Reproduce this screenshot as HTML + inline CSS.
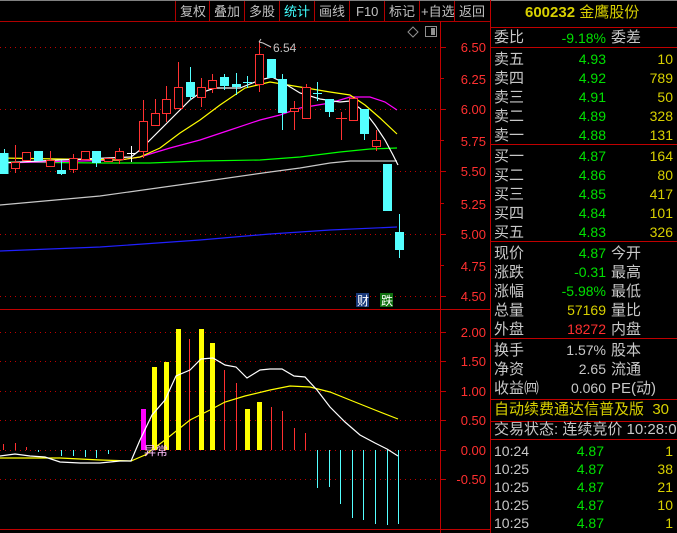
<!DOCTYPE html>
<html><head><meta charset="utf-8"><style>
body{margin:0;background:#000;width:677px;height:533px;overflow:hidden;position:relative;font-family:"Liberation Sans","Noto Sans CJK SC",sans-serif}
.t{position:absolute;font-size:14px;line-height:16px;white-space:nowrap}
.g{color:#c8c8c8}.n{color:#00e000}.y{color:#d8d000}.r{color:#ff3030}
.ra{text-align:right}
.c{font-size:15px}
</style></head><body>
<svg width="677" height="533" style="position:absolute;left:0;top:0" font-family="Liberation Sans,Noto Sans CJK SC,sans-serif">
<line x1="0" y1="0.5" x2="677" y2="0.5" stroke="#808080"/>
<line x1="0" y1="21.5" x2="490" y2="21.5" stroke="#b00000"/>
<g stroke="#b00000"><line x1="175.5" y1="1" x2="175.5" y2="21"/><line x1="209.5" y1="1" x2="209.5" y2="21"/><line x1="244.5" y1="1" x2="244.5" y2="21"/><line x1="279.5" y1="1" x2="279.5" y2="21"/><line x1="314.5" y1="1" x2="314.5" y2="21"/><line x1="349.5" y1="1" x2="349.5" y2="21"/><line x1="384.5" y1="1" x2="384.5" y2="21"/><line x1="419.5" y1="1" x2="419.5" y2="21"/><line x1="454.5" y1="1" x2="454.5" y2="21"/></g>
<g font-size="13" fill="#c0c0c0"><text x="180" y="16">复权</text><text x="214" y="16">叠加</text><text x="249" y="16">多股</text><text x="284" y="16" fill="#40ffff">统计</text><text x="319" y="16">画线</text><text x="356" y="16">F10</text><text x="389" y="16">标记</text><text x="421" y="16">+自选</text><text x="459" y="16">返回</text></g>
<line x1="440.5" y1="21" x2="440.5" y2="533" stroke="#c00000"/>
<line x1="490.5" y1="0" x2="490.5" y2="533" stroke="#c00000"/>
<line x1="0" y1="309.5" x2="490" y2="309.5" stroke="#c00000"/>
<line x1="0" y1="529.5" x2="490" y2="529.5" stroke="#c00000"/>
<g stroke="#c00000" stroke-dasharray="1,4"><line x1="0" y1="47.5" x2="440" y2="47.5"/><line x1="0" y1="109.5" x2="440" y2="109.5"/><line x1="0" y1="171.5" x2="440" y2="171.5"/><line x1="0" y1="234.5" x2="440" y2="234.5"/><line x1="0" y1="296.5" x2="440" y2="296.5"/>
<line x1="0" y1="332.5" x2="440" y2="332.5"/><line x1="0" y1="361.5" x2="440" y2="361.5"/><line x1="0" y1="391.5" x2="440" y2="391.5"/><line x1="0" y1="420.5" x2="440" y2="420.5"/><line x1="0" y1="450.5" x2="440" y2="450.5"/><line x1="0" y1="479.5" x2="440" y2="479.5"/></g>
<g stroke="#c00000"><line x1="440" y1="47.5" x2="446" y2="47.5"/><line x1="440" y1="78.5" x2="444" y2="78.5"/><line x1="440" y1="109.5" x2="446" y2="109.5"/><line x1="440" y1="140.5" x2="444" y2="140.5"/><line x1="440" y1="171.5" x2="446" y2="171.5"/><line x1="440" y1="203.5" x2="444" y2="203.5"/><line x1="440" y1="234.5" x2="446" y2="234.5"/><line x1="440" y1="265.5" x2="444" y2="265.5"/><line x1="440" y1="296.5" x2="446" y2="296.5"/>
<line x1="440" y1="332.5" x2="446" y2="332.5"/><line x1="440" y1="361.5" x2="446" y2="361.5"/><line x1="440" y1="391.5" x2="446" y2="391.5"/><line x1="440" y1="420.5" x2="446" y2="420.5"/><line x1="440" y1="450.5" x2="446" y2="450.5"/><line x1="440" y1="479.5" x2="446" y2="479.5"/></g>
<g font-size="13" fill="#ff3030" text-anchor="end"><text x="486" y="52">6.50</text><text x="486" y="84">6.25</text><text x="486" y="114">6.00</text><text x="486" y="146">5.75</text><text x="486" y="176">5.50</text><text x="486" y="209">5.25</text><text x="486" y="239">5.00</text><text x="486" y="271">4.75</text><text x="486" y="301">4.50</text>
<text x="486" y="337">2.00</text><text x="486" y="366">1.50</text><text x="486" y="396">1.00</text><text x="486" y="425">0.50</text><text x="486" y="455">0.00</text><text x="486" y="484">-0.50</text></g>
<path d="M413 27l5 5-5 5-5-5z" fill="none" stroke="#909090"/>
<rect x="425.5" y="26.5" width="11" height="10" fill="none" stroke="#909090"/><rect x="431" y="28" width="4" height="7" fill="#909090"/>
<g fill="none" stroke-width="1.2">
<polyline stroke="#c8c8c8" points="0,205 100,196 200,182 270,172 300,168 330,163 350,161 397,161"/>
<polyline stroke="#2020ff" points="0,251 100,247 200,240 270,234 330,230 397,227"/>
<polyline stroke="#00ff00" points="0,162 100,163 150,163 200,161 260,160 300,157 340,152 370,149 397,148"/>
<polyline stroke="#ff00ff" points="0,163 120,160 140,157 170,148 200,140 230,130 260,120 280,115 300,108 330,103 350,97 370,97 385,102 397,110"/>
<polyline stroke="#ffff00" points="0,158 120,160 140,157 160,148 180,133 200,120 220,105 245,88 270,82 300,87 330,92 350,95 365,105 380,118 397,134"/>
<polyline stroke="#ffffff" points="0,163 60,160 131,157 140,150 150,140 165,125 180,110 190,100 200,93 215,88 240,88 260,80 272,77 282,82 300,93 320,99 340,102 350,101 365,112 375,125 385,140 393,155 398,165"/>
</g>
<g stroke="#ff3232" fill="#000">
<line x1="15.5" y1="145" x2="15.5" y2="173"/><rect x="11.5" y="162.5" width="8" height="6"/>
<rect x="22.5" y="152.5" width="8" height="8"/>
<line x1="50.5" y1="151" x2="50.5" y2="166"/><rect x="46.5" y="160.5" width="8" height="6"/>
<line x1="73.5" y1="154" x2="73.5" y2="173"/><rect x="69.5" y="158.5" width="8" height="11"/>
<rect x="81.5" y="151.5" width="8" height="8"/>
<rect x="104.5" y="158.5" width="8" height="3"/>
<line x1="119.5" y1="148" x2="119.5" y2="164"/><rect x="115.5" y="151.5" width="8" height="8"/>
<line x1="143.5" y1="100" x2="143.5" y2="158"/><rect x="139.5" y="121.5" width="8" height="30"/>
<line x1="155.5" y1="99" x2="155.5" y2="113"/><rect x="151.5" y="113.5" width="8" height="12"/>
<line x1="166.5" y1="86" x2="166.5" y2="122"/><rect x="162.5" y="99.5" width="8" height="14"/>
<line x1="178.5" y1="62" x2="178.5" y2="87"/><rect x="174.5" y="87.5" width="8" height="21"/>
<line x1="201.5" y1="78" x2="201.5" y2="107"/><rect x="197.5" y="87.5" width="8" height="10"/>
<line x1="212.5" y1="74" x2="212.5" y2="93"/><rect x="208.5" y="80.5" width="8" height="8"/>
<line x1="259.5" y1="42" x2="259.5" y2="92"/><rect x="255.5" y="54.5" width="8" height="30"/>
<line x1="294.5" y1="101" x2="294.5" y2="130"/><rect x="290.5" y="108.5" width="8" height="3"/>
<line x1="306.5" y1="84" x2="306.5" y2="118"/><rect x="302.5" y="87.5" width="8" height="31"/>
<line x1="341.5" y1="112" x2="341.5" y2="140"/><line x1="336" y1="118.5" x2="347" y2="118.5"/>
<rect x="349.5" y="98.5" width="8" height="22"/>
<line x1="376.5" y1="130" x2="376.5" y2="151"/><rect x="372.5" y="140.5" width="8" height="6"/>
</g>
<g fill="#54ffff" stroke="#54ffff">
<line x1="4.5" y1="149" x2="4.5" y2="174"/><rect x="0" y="153.5" width="8" height="20"/>
<rect x="34.5" y="151.5" width="8" height="9"/>
<line x1="61.5" y1="160" x2="61.5" y2="175"/><rect x="57.5" y="170.5" width="8" height="3"/>
<line x1="96.5" y1="151" x2="96.5" y2="167"/><rect x="92.5" y="151.5" width="8" height="11"/>
<line x1="190.5" y1="67" x2="190.5" y2="100"/><rect x="186.5" y="82.5" width="8" height="14"/>
<line x1="224.5" y1="74" x2="224.5" y2="90"/><rect x="220.5" y="77.5" width="8" height="8"/>
<line x1="236.5" y1="73" x2="236.5" y2="95"/><rect x="232.5" y="84.5" width="8" height="2"/>
<line x1="247.5" y1="76" x2="247.5" y2="88"/><line x1="243" y1="82.5" x2="252" y2="82.5"/>
<rect x="267.5" y="59.5" width="8" height="18"/>
<line x1="282.5" y1="74" x2="282.5" y2="130"/><rect x="278.5" y="79.5" width="8" height="33"/>
<line x1="317.5" y1="82" x2="317.5" y2="101"/><line x1="313" y1="93.5" x2="322" y2="93.5"/>
<line x1="329.5" y1="99" x2="329.5" y2="117"/><rect x="325.5" y="99.5" width="8" height="12"/>
<line x1="364.5" y1="109" x2="364.5" y2="140"/><rect x="360.5" y="109.5" width="8" height="24"/>
<rect x="383.5" y="164.5" width="8" height="46"/>
<line x1="399.5" y1="214" x2="399.5" y2="258"/><rect x="395.5" y="232.5" width="8" height="17"/>
</g>
<g stroke="#fff"><line x1="131.5" y1="146" x2="131.5" y2="162"/><line x1="127" y1="153.5" x2="136" y2="153.5"/></g>
<path d="M259 42 l2 -3 M259 42 l4 1 l8 4" stroke="#ccc" fill="none"/>
<text x="273" y="52" font-size="12" fill="#c0c0c0">6.54</text>
<rect x="356" y="293" width="13" height="14" fill="#1a3a7a"/><text x="357" y="305" font-size="12" fill="#fff">财</text>
<rect x="380" y="293" width="13" height="14" fill="#107010"/><text x="381" y="305" font-size="12" fill="#fff">跌</text>
<g fill="#ffff00"><rect x="152" y="367" width="5" height="83"/><rect x="164" y="362" width="5" height="88"/><rect x="176" y="329" width="5" height="121"/><rect x="199" y="329" width="5" height="121"/><rect x="210" y="343" width="5" height="107"/><rect x="245" y="409" width="5" height="41"/><rect x="257" y="402" width="5" height="48"/></g>
<rect x="141" y="409" width="5" height="41" fill="#ff00ff"/>
<g stroke="#ff3030"><line x1="189.5" y1="339" x2="189.5" y2="450"/><line x1="224.5" y1="370" x2="224.5" y2="450"/><line x1="236.5" y1="383" x2="236.5" y2="450"/><line x1="271.5" y1="407" x2="271.5" y2="450"/><line x1="282.5" y1="411" x2="282.5" y2="450"/><line x1="294.5" y1="428" x2="294.5" y2="450"/><line x1="305.5" y1="433" x2="305.5" y2="450"/><line x1="3.5" y1="444" x2="3.5" y2="450"/><line x1="15.5" y1="443" x2="15.5" y2="450"/><line x1="26.5" y1="447" x2="26.5" y2="450"/></g>
<g stroke="#54ffff"><line x1="317.5" y1="450" x2="317.5" y2="488"/><line x1="329.5" y1="450" x2="329.5" y2="487"/><line x1="340.5" y1="450" x2="340.5" y2="504"/><line x1="352.5" y1="450" x2="352.5" y2="518"/><line x1="363.5" y1="450" x2="363.5" y2="520"/><line x1="375.5" y1="450" x2="375.5" y2="524"/><line x1="387.5" y1="450" x2="387.5" y2="525"/><line x1="398.5" y1="450" x2="398.5" y2="524"/>
<line x1="61.5" y1="450" x2="61.5" y2="456"/><line x1="73.5" y1="450" x2="73.5" y2="456"/><line x1="85.5" y1="450" x2="85.5" y2="457"/><line x1="96.5" y1="450" x2="96.5" y2="458"/><line x1="108.5" y1="450" x2="108.5" y2="454"/><line x1="38.5" y1="450" x2="38.5" y2="452"/></g>
<g fill="none" stroke-width="1.2">
<polyline stroke="#ffff00" points="0,458 60,458 100,460 131,461 145,455 165,440 190,420 210,410 225,402 245,396 270,390 290,386 310,387 330,392 350,400 375,410 398,419"/>
<polyline stroke="#fff" points="0,456 15,454 30,456 45,457 60,462 80,463 100,463 120,461 131,461 140,440 152,415 165,400 176,376 190,370 201,359 213,358 225,365 236,367 247,378 260,370 270,369 282,369 294,376 305,377 317,390 330,407 345,422 360,435 375,443 387,449 398,456"/>
</g>
<text x="144" y="455" font-size="12" fill="#ffc0ff">异常</text>
<g stroke="#c00000"><line x1="490" y1="27.5" x2="677" y2="27.5"/><line x1="490" y1="47.5" x2="677" y2="47.5"/><line x1="490" y1="144.5" x2="677" y2="144.5"/><line x1="490" y1="241.5" x2="677" y2="241.5"/><line x1="490" y1="338.5" x2="677" y2="338.5"/><line x1="490" y1="399.5" x2="677" y2="399.5"/><line x1="490" y1="421.5" x2="677" y2="421.5"/><line x1="490" y1="439.5" x2="677" y2="439.5"/></g>
</svg>
<div class="t y" style="left:525px;top:5px;font-size:15px;font-weight:bold">600232 <span style="font-weight:normal">金鹰股份</span></div>
<div class="t g c" style="left:494px;top:30px">委比</div><div class="t n ra" style="left:540px;top:30px;width:66px">-9.18%</div><div class="t g c" style="left:611px;top:30px">委差</div>
<div class="t g c" style="left:494px;top:50px;line-height:19px">卖五<br>卖四<br>卖三<br>卖二<br>卖一</div>
<div class="t n ra" style="left:540px;top:50px;width:66px;line-height:19px">4.93<br>4.92<br>4.91<br>4.89<br>4.88</div>
<div class="t y ra" style="left:620px;top:50px;width:53px;line-height:19px">10<br>789<br>50<br>328<br>131</div>
<div class="t g c" style="left:494px;top:147px;line-height:19px">买一<br>买二<br>买三<br>买四<br>买五</div>
<div class="t n ra" style="left:540px;top:147px;width:66px;line-height:19px">4.87<br>4.86<br>4.85<br>4.84<br>4.83</div>
<div class="t y ra" style="left:620px;top:147px;width:53px;line-height:19px">164<br>80<br>417<br>101<br>326</div>
<div class="t g c" style="left:494px;top:244px;line-height:19px">现价<br>涨跌<br>涨幅<br>总量<br>外盘</div>
<div class="t ra" style="left:520px;top:244px;width:86px;line-height:19px"><span class="n">4.87</span><br><span class="n">-0.31</span><br><span class="n">-5.98%</span><br><span class="y">57169</span><br><span class="r">18272</span></div>
<div class="t g c" style="left:611px;top:244px;line-height:19px">今开<br>最高<br>最低<br>量比<br>内盘</div>
<div class="t g c" style="left:494px;top:341px;line-height:19px">换手<br>净资<br>收益㈣</div>
<div class="t g ra" style="left:520px;top:341px;width:86px;line-height:19px">1.57%<br>2.65<br>0.060</div>
<div class="t g c" style="left:611px;top:341px;line-height:19px">股本<br>流通<br>PE(动)</div>
<div class="t y c" style="left:494px;top:402px">自动续费通达信普及版 &nbsp;30</div>
<div class="t g c" style="left:494px;top:422px">交易状态: 连续竞价 10:28:0</div>
<div class="t g" style="left:494px;top:442px;line-height:18px">10:24<br>10:25<br>10:25<br>10:25<br>10:25</div>
<div class="t n ra" style="left:540px;top:442px;width:64px;line-height:18px">4.87<br>4.87<br>4.87<br>4.87<br>4.87</div>
<div class="t y ra" style="left:620px;top:442px;width:53px;line-height:18px">1<br>38<br>21<br>10<br>1</div>
</body></html>
